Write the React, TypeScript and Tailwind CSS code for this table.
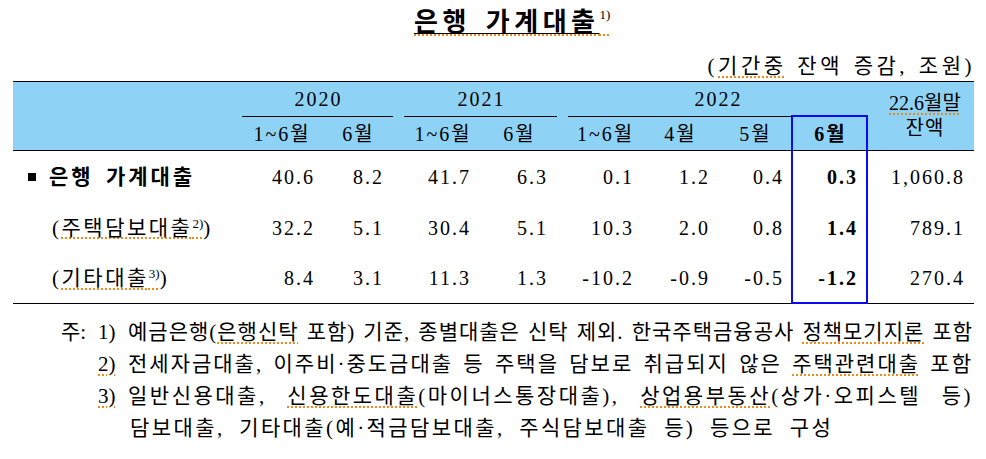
import React from "react";

const FONT = "font-['Liberation_Serif','Noto_Sans_CJK_KR',serif]";
const COLS =
  "grid grid-cols-[229px_78px_75px_9px_76px_77px_10px_75px_75px_75px_75px_107px]";

function Dot({ children }: { children: React.ReactNode }) {
  return (
    <span className="underline decoration-dotted decoration-[#f08a1c] decoration-2 underline-offset-[3px]">
      {children}
    </span>
  );
}

type Row = {
  label: React.ReactNode;
  values: string[];
};

const rows: Row[] = [
  {
    label: (
      <div className="flex items-center pl-[15px]">
        <span className="inline-block w-[8px] h-[8px] bg-black mr-[13px]" />
        <span className="font-bold text-[21px] tracking-[3px] [word-spacing:4px]">은행 가계대출</span>
      </div>
    ),
    values: ["40.6", "8.2", "41.7", "6.3", "0.1", "1.2", "0.4", "0.3", "1,060.8"],
  },
  {
    label: (
      <div className="pl-[39px] text-[21px] tracking-[2.5px]">
        (
        <Dot>
          주택담보대출
          <sup className="text-[13px] tracking-[0px] top-[-7px]">2)</sup>
        </Dot>
        )
      </div>
    ),
    values: ["32.2", "5.1", "30.4", "5.1", "10.3", "2.0", "0.8", "1.4", "789.1"],
  },
  {
    label: (
      <div className="pl-[39px] text-[21px] tracking-[2.5px]">
        (
        <Dot>
          기타대출
          <sup className="text-[13px] tracking-[0px] top-[-7px]">3)</sup>
        </Dot>
        )
      </div>
    ),
    values: ["8.4", "3.1", "11.3", "1.3", "-10.2", "-0.9", "-0.5", "-1.2", "270.4"],
  },
];

const PR = [
  "pr-[5px]",
  "pr-[11px]",
  "pr-[9px]",
  "pr-[9px]",
  "pr-[8px]",
  "pr-[7px]",
  "pr-[8px]",
  "pr-[9px] font-bold",
  "pr-[9px]",
];

const SUB = ["1~6월", "6월", "1~6월", "6월", "1~6월", "4월", "5월", "6월"];

function NumCell({ v, i }: { v: string; i: number }) {
  return (
    <div className={`flex items-center justify-end tracking-[2px] ${PR[i]}`}>{v}</div>
  );
}

export default function App() {
  return (
    <div className={`w-[986px] h-[459px] bg-white text-black overflow-hidden ${FONT}`}>
      {/* Title */}
      <div className="h-[36px] pl-[414px] pt-[12px] text-[26px] leading-[21px]">
        <span className="underline decoration-dotted decoration-[#f08a1c] decoration-2 underline-offset-[3px]">
          <span className="font-semibold tracking-[4.5px] [word-spacing:4px] underline decoration-black decoration-1 underline-offset-[2px]">
            은행 가계대출
          </span>
          <sup className="text-[13px] top-[-12px]">1)</sup>
        </span>
      </div>

      {/* Unit */}
      <div className="h-[45px] pt-[19px] pr-[11px] text-right text-[21px] leading-[22px] tracking-[3.5px] [word-spacing:2px]">
        (<Dot>기간중</Dot> 잔액 증감, 조원)
      </div>

      {/* Table */}
      <div className="relative ml-[13px] w-[961px]">
        <div
          className={`${COLS} grid-rows-[35px_33px] bg-[#8ed3f5] border-t border-b border-black text-[20px] leading-[20px]`}
        >
          <div className="row-span-2" />
          <div className="col-span-2 flex items-center justify-center border-b border-black mr-[2px] pl-[2px] tracking-[2px]">
            2020
          </div>
          <div className="row-span-2" />
          <div className="col-span-2 flex items-center justify-center border-b border-black pl-[2px] tracking-[2px]">
            2021
          </div>
          <div className="row-span-2" />
          <div className="col-span-4 flex items-center justify-center border-b border-black ml-[1px] pl-[2px] tracking-[2px]">
            2022
          </div>
          <div className="row-span-2 flex flex-col items-center justify-center pl-[9px] leading-[25px]">
            <Dot>22.6월말</Dot>
            <span className="tracking-[1px]">잔액</span>
          </div>
          {SUB.map((s, i) => (
            <div
              key={i}
              className={`flex items-center justify-center tracking-[2px] pl-[2px] ${
                i === 7 ? "font-bold" : ""
              }`}
            >
              {s}
            </div>
          ))}
        </div>

        <div
          className={`${COLS} grid-rows-[51px_51px_50px] border-b border-black text-[20px] leading-[20px]`}
        >
          {rows.map((r, ri) => (
            <React.Fragment key={ri}>
              <div className="flex items-center">{r.label}</div>
              <NumCell v={r.values[0]} i={0} />
              <NumCell v={r.values[1]} i={1} />
              <div />
              <NumCell v={r.values[2]} i={2} />
              <NumCell v={r.values[3]} i={3} />
              <div />
              <NumCell v={r.values[4]} i={4} />
              <NumCell v={r.values[5]} i={5} />
              <NumCell v={r.values[6]} i={6} />
              <NumCell v={r.values[7]} i={7} />
              <NumCell v={r.values[8]} i={8} />
            </React.Fragment>
          ))}
        </div>

        {/* highlight box */}
        <div className="absolute left-[778px] top-[34px] w-[77px] h-[189px] border-2 border-[#0a0af0] pointer-events-none" />
      </div>

      {/* Notes */}
      <div className="ml-[61px] w-[912px] pt-[12px] text-[21px] leading-[32px]">
        <div className="flex h-[32px]">
          <span className="w-[37px] shrink-0">주:</span>
          <span className="w-[30px] shrink-0">1)</span>
          <span className="flex-1 whitespace-nowrap tracking-[1px] text-justify [text-align-last:justify]">
            예금은행(<Dot>은행신탁</Dot> 포함) 기준, 종별대출은 신탁 제외. 한국주택금융공사{" "}
            <Dot>정책모기지론</Dot> 포함
          </span>
        </div>
        <div className="flex h-[32px]">
          <span className="w-[37px] shrink-0" />
          <span className="w-[30px] shrink-0">
            <Dot>2)</Dot>
          </span>
          <span className="flex-1 whitespace-nowrap tracking-[2px] text-justify [text-align-last:justify]">
            전세자금대출, 이주비·중도금대출 등 주택을 담보로 취급되지 않은{" "}
            <Dot>주택관련대출</Dot> 포함
          </span>
        </div>
        <div className="flex h-[32px]">
          <span className="w-[37px] shrink-0" />
          <span className="w-[30px] shrink-0">
            <Dot>3)</Dot>
          </span>
          <span className="flex-1 whitespace-nowrap tracking-[2.5px] text-justify [text-align-last:justify]">
            일반신용대출, <Dot>신용한도대출</Dot>(마이너스통장대출), <Dot>상업용부동산</Dot>(상가·오피스텔 등)
          </span>
        </div>
        <div className="h-[32px] pl-[69px] whitespace-nowrap tracking-[2.4px] [word-spacing:7px]">
          담보대출, 기타대출(예·적금담보대출, 주식담보대출 등) 등으로 구성
        </div>
      </div>
    </div>
  );
}
